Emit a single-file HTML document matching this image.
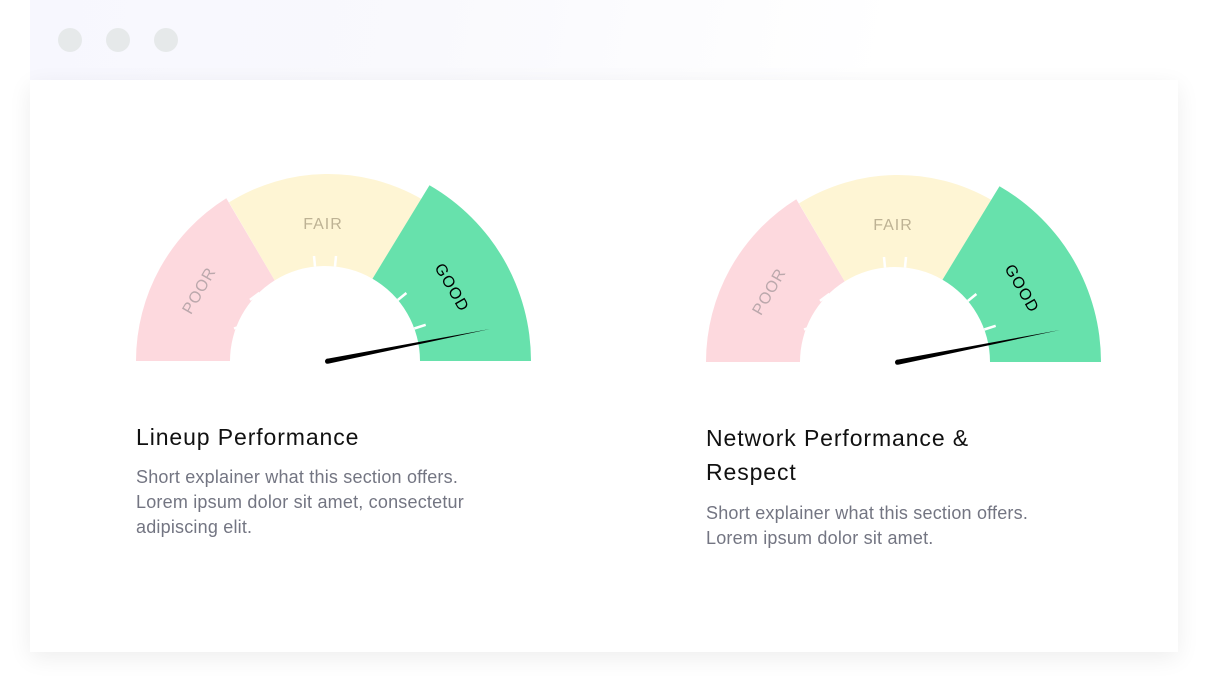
<!DOCTYPE html>
<html><head><meta charset="utf-8"><style>
html,body{margin:0;padding:0;width:1208px;height:682px;overflow:hidden;background:#fff;font-family:"Liberation Sans",Arial,sans-serif;}
.top{position:absolute;left:30px;top:0;width:1148px;height:80px;background:linear-gradient(100deg,#f7f7fe 0%,#f9f9fd 35%,#fcfcfe 55%,#fff 75%);}
.dot{position:absolute;top:28px;width:24px;height:24px;border-radius:50%;background:#e6e9ea;}
.card{position:absolute;left:30px;top:80px;width:1148px;height:572px;background:#fff;box-shadow:0 6px 22px rgba(0,0,0,0.07);}
.t{position:absolute;font-size:23px;color:#111;letter-spacing:0.9px;white-space:nowrap;}
.b{position:absolute;font-size:18px;color:#737582;line-height:25px;letter-spacing:0.2px;white-space:nowrap;}
svg{position:absolute;left:0;top:0;}
</style></head><body>
<div class="top"></div>
<div class="dot" style="left:58px"></div>
<div class="dot" style="left:106px"></div>
<div class="dot" style="left:154px"></div>
<div class="card"></div>
<svg width="1208" height="682" viewBox="0 0 1208 682">
<defs>
<g id="g">
<path d="M136,361 A192,192 0 0 1 226.3,198.2 L274.7,280.4 A95,95 0 0 0 230,361 Z" fill="#fdd9de"/>
<path d="M229,202.4 A187,187 0 0 1 421.5,199 L372.5,278.7 A95,95 0 0 0 274.7,280.4 Z" fill="#fef5d4"/>
<path d="M429.5,185.2 A203,203 0 0 1 531,361 L420,361 A95,95 0 0 0 372.5,278.7 Z" fill="#67e1ac"/>
<g stroke="#fff" stroke-width="2.5">
<line x1="234" y1="328.5" x2="245" y2="324.8"/>
<line x1="250" y1="299.9" x2="259.4" y2="292.9"/>
<line x1="315" y1="266.5" x2="314" y2="256"/>
<line x1="335" y1="266.5" x2="336" y2="256"/>
<line x1="397.8" y1="300" x2="406.4" y2="293"/>
<line x1="414.3" y1="328.5" x2="425.7" y2="324.8"/>
</g>
<path d="M326.4,358.9 L490,329 L328.6,363.6 Z" fill="#000"/>
<circle cx="327.5" cy="361.3" r="2.5" fill="#000"/>
<text x="0" y="0" transform="translate(200,291) rotate(-60)" text-anchor="middle" dominant-baseline="middle" font-size="16" fill="#bba8ac" letter-spacing="1" font-family="Liberation Sans, sans-serif">POOR</text>
<text x="323" y="229" text-anchor="middle" font-size="16" fill="#bdb294" letter-spacing="1" font-family="Liberation Sans, sans-serif">FAIR</text>
<text x="0" y="0" transform="translate(451,288) rotate(60)" text-anchor="middle" dominant-baseline="middle" font-size="16" fill="#000" letter-spacing="1" font-family="Liberation Sans, sans-serif">GOOD</text>
</g>
</defs>
<use href="#g"/>
<use href="#g" transform="translate(570,1)"/>
</svg>
<div class="t" style="left:136px;top:424px">Lineup Performance</div>
<div class="b" style="left:136px;top:465px">Short explainer what this section offers.<br>Lorem ipsum dolor sit amet, consectetur<br>adipiscing elit.</div>
<div class="t" style="left:706px;top:425px">Network Performance &amp;</div>
<div class="t" style="left:706px;top:459px">Respect</div>
<div class="b" style="left:706px;top:501px">Short explainer what this section offers.<br>Lorem ipsum dolor sit amet.</div>
</body></html>
